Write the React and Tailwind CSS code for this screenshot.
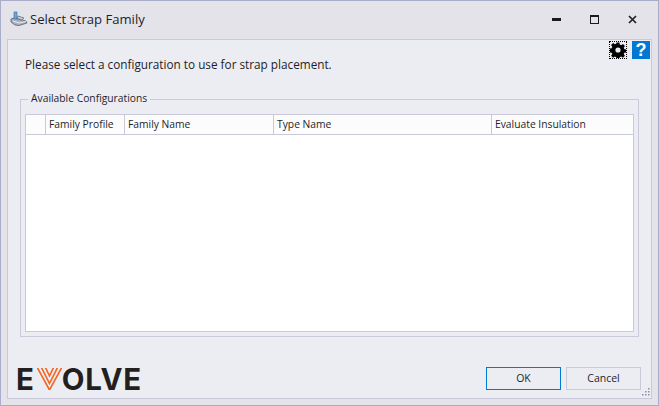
const headers = [
  { label: "", width: "w-[20px]" },
  { label: "Family Profile", width: "w-[79px]" },
  { label: "Family Name", width: "w-[149px]" },
  { label: "Type Name", width: "w-[218px]" },
  { label: "Evaluate Insulation", width: "flex-1" },
];

function AppIcon() {
  return (
    <svg width="18" height="16" viewBox="0 0 18 16" className="shrink-0">
      <path d="M1 8 L4 7 L16 10 L17 12 L9 14.5 L5 14 L1 11 Z" fill="#aab1bd" stroke="#59616e" strokeWidth="0.8" />
      <path d="M3 10 L9 12 L16 10.5" fill="none" stroke="#eef0f4" strokeWidth="0.9" />
      <path d="M8 5 L14 7 L12 9 L7 7.5 Z" fill="#c6ccd6" stroke="#59616e" strokeWidth="0.7" />
      <rect x="4" y="1" width="3" height="7" fill="#6aa6dc" stroke="#3a6a98" strokeWidth="0.6" />
    </svg>
  );
}

function WindowButtons() {
  return (
    <div className="flex items-center">
      <button className="flex h-[20px] w-[38px] items-center justify-center">
        <span className="h-[3px] w-[9px] bg-[#1a1a1a]" />
      </button>
      <button className="flex h-[20px] w-[38px] items-center justify-center">
        <span className="h-[9px] w-[9px] border border-t-2 border-[#1a1a1a]" />
      </button>
      <button className="flex h-[20px] w-[38px] items-center justify-center">
        <svg width="9" height="9" viewBox="0 0 9 9">
          <path d="M1 1 L8 8 M8 1 L1 8" stroke="#222" strokeWidth="1.7" />
        </svg>
      </button>
    </div>
  );
}

function GearIcon() {
  return (
    <div className="flex h-[18px] w-[18px] items-center justify-center border border-dotted border-black">
      <svg width="16" height="16" viewBox="0 0 16 16" className="shrink-0">
        <path
          d="M6.6 0.5h2.8l.4 2.1 1.3.6 1.8-1.2 2 2-1.2 1.8.6 1.3 2.1.4v2.8l-2.1.4-.6 1.3 1.2 1.8-2 2-1.8-1.2-1.3.6-.4 2.1H6.6l-.4-2.1-1.3-.6-1.8 1.2-2-2 1.2-1.8-.6-1.3-2.1-.4V6.6l2.1-.4.6-1.3-1.2-1.8 2-2 1.8 1.2 1.3-.6Z"
          fill="#000"
        />
        <circle cx="8" cy="8" r="2.6" fill="#ecedf3" />
      </svg>
    </div>
  );
}

function LogoV() {
  return (
    <svg width="25" height="22" viewBox="0 0 25 22" className="ml-[2px] shrink-0">
      <path d="M0 -1 L12.5 22 L25 -1" fill="none" stroke="#f26522" strokeWidth="1.6" />
      <path d="M4.2 -1 L12.5 15.5 L20.8 -1" fill="none" stroke="#f26522" strokeWidth="1.6" />
      <path d="M8.2 -1 L12.5 8 L16.8 -1" fill="none" stroke="#f26522" strokeWidth="1.6" />
    </svg>
  );
}

export default function App() {
  return (
    <div className="flex h-[406px] w-[659px] flex-col overflow-hidden border border-[#a9adca] bg-[#e3e3e9] font-['Liberation_Sans',sans-serif] text-[#1e1e2a]">
      <div className="flex h-[38px] shrink-0 items-center justify-between pb-[1px] pl-[9px] pr-[7px]">
        <div className="flex items-center gap-[2px]">
          <AppIcon />
          <span className="font-['Open_Sans',sans-serif] text-[13.1px]">Select Strap Family</span>
        </div>
        <WindowButtons />
      </div>

      <div className="mx-[6px] mb-[6px] flex flex-1 flex-col border border-[#c9c9da] bg-[#ecedf3]">
        <div className="relative h-[40px] shrink-0 pl-[17px] pt-[15px] font-['Open_Sans',sans-serif] text-[11.75px] leading-[18px]">
          Please select a configuration to use for strap placement.
          <div className="absolute right-[1px] top-[1px] flex items-center gap-[5px]">
            <GearIcon />
            <div className="flex h-[18px] w-[18px] items-center justify-center bg-[#0078d4] font-['Liberation_Sans',sans-serif] text-[18px] font-bold leading-none text-white">
              ?
            </div>
          </div>
        </div>

        <div className="relative mx-[12px] mt-[19px] border border-[#c9c9da] px-[4px] pb-[4px] pt-[14px]">
          <span className="absolute left-[7px] top-[-10px] bg-[#ecedf3] px-[3px] font-['Open_Sans',sans-serif] text-[10.3px] leading-[16px]">
            Available Configurations
          </span>
          <div className="flex h-[218px] flex-col border border-[#c9c9da] bg-white">
            <div className="flex h-[20px] shrink-0 border-b border-[#c9c9da] bg-[#fcfcfd]">
              {headers.map((h) => (
                <div
                  key={h.label || "select"}
                  className={`${h.width} border-r border-[#c9c9da] pl-[3px] font-['Open_Sans',sans-serif] text-[10.3px] leading-[18px] last:border-r-0`}
                >
                  {h.label}
                </div>
              ))}
            </div>
          </div>
        </div>

        <div className="relative flex flex-1 items-end justify-between pb-[8px] pl-[8px] pr-[10px]">
          <div className="flex items-center text-[29.5px] font-bold leading-[22px] tracking-[0.8px] text-[#231f20] font-['Inter',sans-serif]">
            <span>E</span>
            <LogoV />
            <span>OLVE</span>
          </div>
          <div className="flex gap-[5px]">
            <button className="h-[23px] w-[75px] border border-[#0078d4] bg-[#ecedf3] font-['Open_Sans',sans-serif] text-[10.5px]">OK</button>
            <button className="h-[23px] w-[75px] border border-[#c9c9da] bg-[#ecedf3] font-['Open_Sans',sans-serif] text-[10.5px]">Cancel</button>
          </div>
          <svg width="10" height="10" viewBox="0 0 10 10" className="absolute bottom-[1px] right-[1px]">
            <path d="M8 1h1.5v1.5H8zM5 4h1.5v1.5H5zM8 4h1.5v1.5H8zM2 7h1.5v1.5H2zM5 7h1.5v1.5H5zM8 7h1.5v1.5H8z" fill="#8e8ea0" />
          </svg>
        </div>
      </div>
    </div>
  );
}
